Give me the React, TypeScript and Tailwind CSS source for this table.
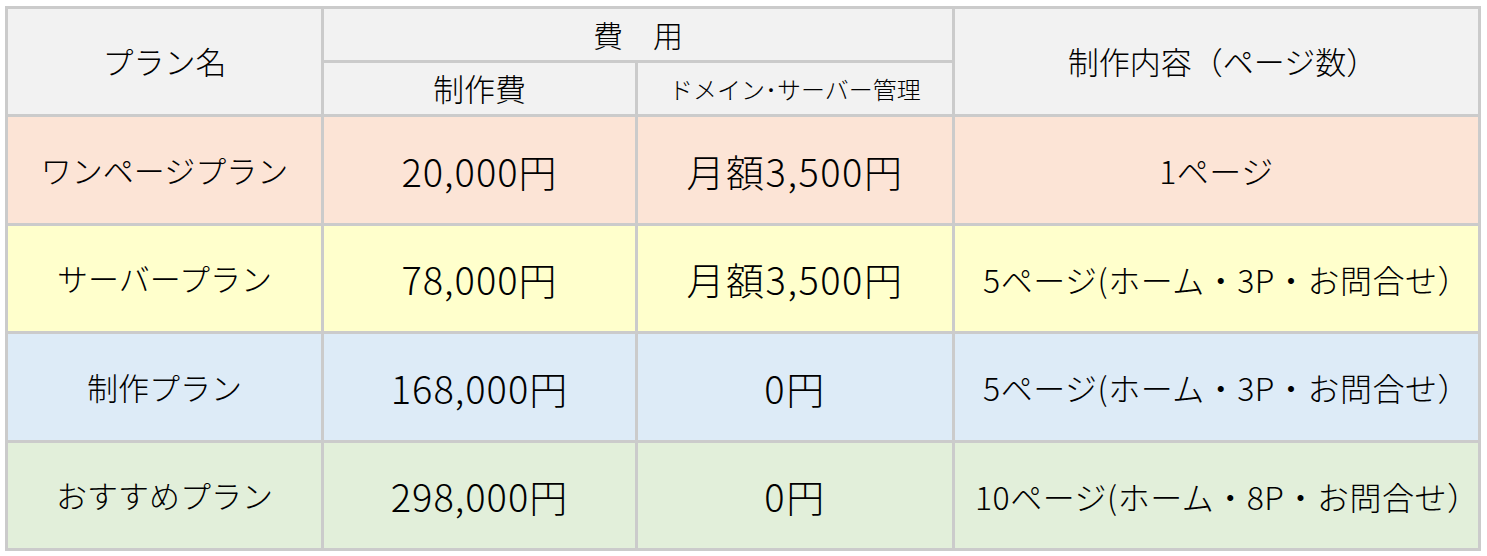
import React from "react";

type Plan = {
  name: string;
  price: string;
  server: string;
  content: string;
  bg: string;
};

const plans: Plan[] = [
  { name: "ワンページプラン", price: "20,000円", server: "月額3,500円", content: "1ページ", bg: "bg-[#fce4d6]" },
  { name: "サーバープラン", price: "78,000円", server: "月額3,500円", content: "5ページ(ホーム・3P・お問合せ）", bg: "bg-[#ffffcc]" },
  { name: "制作プラン", price: "168,000円", server: "0円", content: "5ページ(ホーム・3P・お問合せ）", bg: "bg-[#ddebf7]" },
  { name: "おすすめプラン", price: "298,000円", server: "0円", content: "10ページ(ホーム・8P・お問合せ）", bg: "bg-[#e2efda]" },
];

const App = () => {
  return (
    <div className="w-[1487px] h-[556px] bg-white pt-[6px] pl-[5px] font-['Noto_Sans_CJK_JP','Noto_Sans',sans-serif] font-light text-black">
      <div className="grid w-[1476px] grid-cols-[313px_311px_314px_523px] grid-rows-[51px_51px_106px_105px_106px_105px] gap-[3px] bg-[#cbcbcb] p-[3px]">
        {/* header */}
        <div className="row-span-2 flex items-center justify-center bg-[#f2f2f2] text-[31px]">
          プラン名
        </div>
        <div className="col-span-2 flex items-center justify-center bg-[#f2f2f2] text-[30px]">
          費　用
        </div>
        <div className="row-span-2 flex items-center justify-center bg-[#f2f2f2] pl-[12px] text-[31px]">
          制作内容（ページ数）
        </div>
        <div className="flex items-center justify-center bg-[#f2f2f2] text-[31px]">
          制作費
        </div>
        <div className="flex items-center justify-center bg-[#f2f2f2] text-[24px]">
          ドメイン･サーバー管理
        </div>

        {/* rows */}
        {plans.map((p) => (
          <React.Fragment key={p.name}>
            <div className={`${p.bg} flex items-center justify-center text-[31px]`}>
              {p.name}
            </div>
            <div className={`${p.bg} flex items-center justify-center text-[38px] tracking-[1px]`}>
              {p.price}
            </div>
            <div className={`${p.bg} flex items-center justify-center text-[38px] tracking-[1.5px]`}>
              {p.server}
            </div>
            <div
              className={`${p.bg} flex items-center justify-center text-[32px] tracking-[0.5px] ${
                p.content.endsWith("）") ? "pl-[20px]" : ""
              }`}
            >
              {p.content}
            </div>
          </React.Fragment>
        ))}
      </div>
    </div>
  );
};

export default App;
